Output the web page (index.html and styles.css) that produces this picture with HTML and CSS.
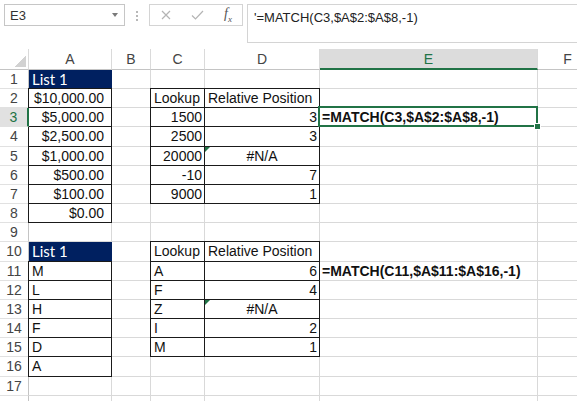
FILE: index.html
```html
<!DOCTYPE html>
<html lang="en">
<head>
    <meta charset="UTF-8">
    <meta name="viewport" content="width=device-width, initial-scale=1.0">
    <title>MATCH with -1</title>
    <link rel="stylesheet" href="styles.css">
</head>
<body>
    <div class="formula-bar">
        <div class="name-box"><span>E3</span><span class="caret"></span></div>
        <div class="grip"></div>
        <div class="fx-box">
            <svg class="icon-x" width="10" height="10" viewBox="0 0 10 10">
                <path d="M1 1 L9 9 M9 1 L1 9" />
            </svg>
            <svg class="icon-ok" width="13" height="10" viewBox="0 0 13 10">
                <path d="M1 5.5 L4.5 9 L12 1" />
            </svg>
            <span class="fx">f<sub>x</sub></span>
        </div>
        <div class="formula-input">'=MATCH(C3,$A$2:$A$8,-1)</div>
    </div>

    <div class="sheet">
        <!-- column headers -->
        <div class="corner"></div><div class="ch">A</div><div class="ch">B</div><div class="ch">C</div><div class="ch">D</div><div class="ch sel">E</div><div class="ch">F</div>

        <!-- first table: numbers -->
        <div class="rh">1</div><div class="c hdr">List 1</div><div class="c"></div><div class="c"></div><div class="c"></div><div class="c"></div><div class="c"></div>
        <div class="rh">2</div><div class="c box cur">$10,000.00</div><div class="c"></div><div class="c box">Lookup</div><div class="c box">Relative Position</div><div class="c"></div><div class="c"></div>
        <div class="rh sel">3</div><div class="c box cur">$5,000.00</div><div class="c"></div><div class="c box num">1500</div><div class="c box num">3</div><div class="c sel bold">=MATCH(C3,$A$2:$A$8,-1)</div><div class="c"></div>
        <div class="rh">4</div><div class="c box cur">$2,500.00</div><div class="c"></div><div class="c box num">2500</div><div class="c box num">3</div><div class="c"></div><div class="c"></div>
        <div class="rh">5</div><div class="c box cur">$1,000.00</div><div class="c"></div><div class="c box num">20000</div><div class="c box err">#N/A</div><div class="c"></div><div class="c"></div>
        <div class="rh">6</div><div class="c box cur">$500.00</div><div class="c"></div><div class="c box num">-10</div><div class="c box num">7</div><div class="c"></div><div class="c"></div>
        <div class="rh">7</div><div class="c box cur">$100.00</div><div class="c"></div><div class="c box num">9000</div><div class="c box num">1</div><div class="c"></div><div class="c"></div>
        <div class="rh">8</div><div class="c box cur">$0.00</div><div class="c"></div><div class="c"></div><div class="c"></div><div class="c"></div><div class="c"></div>
        <div class="rh">9</div><div class="c"></div><div class="c"></div><div class="c"></div><div class="c"></div><div class="c"></div><div class="c"></div>

        <!-- second table: letters -->
        <div class="rh">10</div><div class="c hdr">List 1</div><div class="c"></div><div class="c box">Lookup</div><div class="c box">Relative Position</div><div class="c"></div><div class="c"></div>
        <div class="rh">11</div><div class="c box">M</div><div class="c"></div><div class="c box">A</div><div class="c box num">6</div><div class="c bold">=MATCH(C11,$A$11:$A$16,-1)</div><div class="c"></div>
        <div class="rh">12</div><div class="c box">L</div><div class="c"></div><div class="c box">F</div><div class="c box num">4</div><div class="c"></div><div class="c"></div>
        <div class="rh">13</div><div class="c box">H</div><div class="c"></div><div class="c box">Z</div><div class="c box err">#N/A</div><div class="c"></div><div class="c"></div>
        <div class="rh">14</div><div class="c box">F</div><div class="c"></div><div class="c box">I</div><div class="c box num">2</div><div class="c"></div><div class="c"></div>
        <div class="rh">15</div><div class="c box">D</div><div class="c"></div><div class="c box">M</div><div class="c box num">1</div><div class="c"></div><div class="c"></div>
        <div class="rh">16</div><div class="c box">A</div><div class="c"></div><div class="c"></div><div class="c"></div><div class="c"></div><div class="c"></div>
        <div class="rh">17</div><div class="c"></div><div class="c"></div><div class="c"></div><div class="c"></div><div class="c"></div><div class="c"></div>
        <div class="rh"></div><div class="c"></div><div class="c"></div><div class="c"></div><div class="c"></div><div class="c"></div><div class="c"></div>
    </div>
</body>
</html>
```

FILE: styles.css
```css
body {
    margin: 0;
    width: 577px;
    height: 401px;
    overflow: hidden;
    background: #fff;
    font-family: "Liberation Sans", Arial, sans-serif;
}

/* formula bar */
.formula-bar {
    display: flex;
    height: 43px;
}
.name-box {
    box-sizing: border-box;
    width: 121px;
    height: 22px;
    margin: 4px 0 0 4px;
    padding: 0 6px 0 5px;
    border: 1px solid #c6c6c6;
    display: flex;
    align-items: center;
    justify-content: space-between;
    font-size: 13px;
    color: #333;
}
.caret {
    width: 0;
    height: 0;
    border-left: 3.5px solid transparent;
    border-right: 3.5px solid transparent;
    border-top: 4px solid #7a7a7a;
}
.grip {
    width: 2px;
    height: 10px;
    margin: 11px 11px 0 11px;
    background: repeating-linear-gradient(#b8b8b8 0 2px, transparent 2px 4px);
}
.fx-box {
    box-sizing: border-box;
    width: 94px;
    height: 22px;
    margin-top: 4px;
    padding-left: 11px;
    border: 1px solid #d4d4d4;
    display: flex;
    align-items: center;
}
.fx-box svg path {
    fill: none;
    stroke: #b4b4b4;
    stroke-width: 1.2;
}
.icon-ok {
    margin-left: 20px;
}
.fx {
    margin-left: 20px;
    font-family: "Liberation Serif", serif;
    font-style: italic;
    font-size: 14px;
    color: #555;
}
.fx sub {
    font-size: 9px;
}
.formula-input {
    flex: 1;
    height: 39px;
    margin: 4px 0 0 4px;
    padding: 5px 6px;
    box-sizing: border-box;
    border-top: 1px solid #d4d4d4;
    border-left: 1px solid #d4d4d4;
    border-bottom: 1px solid #d4d4d4;
    font-size: 13px;
    color: #222;
    white-space: nowrap;
}

/* grid */
.sheet {
    display: grid;
    grid-template-columns: 29px 83px 39px 54px 115px 218px 60px;
    grid-template-rows: 21px;
    grid-auto-rows: 19.17px;
    margin-top: 6px;
    font-size: 14px;
}
.corner {
    border-right: 1px solid #dadada;
    border-bottom: 1px solid #c4c4c4;
    background: linear-gradient(to top left, #d2d2d2 50%, transparent 50%) right 2px bottom 2px / 12px 12px no-repeat;
}
.ch {
    border-right: 1px solid #dadada;
    border-bottom: 1px solid #c4c4c4;
    text-align: center;
    line-height: 20px;
    color: #444;
}
.ch.sel {
    background: #dcdcdc;
    color: #217346;
    border-bottom: 2px solid #217346;
}
.rh {
    border-right: 1px solid #c4c4c4;
    border-bottom: 1px solid #e1e1e1;
    text-align: center;
    line-height: 18px;
    color: #444;
}
.rh.sel {
    z-index: 1;
    background: #e1e1e1;
    color: #217346;
    border-right: 2px solid #217346;
}
.c {
    border-right: 1px solid #d9d9d9;
    border-bottom: 1px solid #d9d9d9;
    padding: 0 3px;
    line-height: 18px;
    white-space: nowrap;
    color: #111;
}
.box {
    border-right-color: #1a1a1a;
    border-bottom-color: #1a1a1a;
    box-shadow: -1px 0 #1a1a1a, 0 -1px #1a1a1a, -1px -1px #1a1a1a;
}
.hdr {
    background: #002060;
    border-right-color: #002060;
    color: #fff;
    font-family: Lato, "Liberation Sans", sans-serif;
    font-size: 15px;
}
.num {
    text-align: right;
    padding-right: 2px;
}
.cur {
    text-align: right;
    padding-right: 7px;
}
.err {
    position: relative;
    text-align: center;
}
.err::before {
    content: "";
    position: absolute;
    top: 0;
    left: 0;
    border-top: 5px solid #217346;
    border-right: 5px solid transparent;
}
.bold {
    font-weight: bold;
    padding-left: 2px;
}
.c.sel {
    position: relative;
}
.c.sel::after {
    content: "";
    position: absolute;
    top: -2px;
    left: -2px;
    right: -1px;
    bottom: -1px;
    border: 2px solid #217346;
}
.c.sel::before {
    content: "";
    position: absolute;
    right: -4px;
    bottom: -4px;
    width: 5px;
    height: 5px;
    background: #217346;
    border: 1px solid #fff;
    z-index: 1;
}
```
